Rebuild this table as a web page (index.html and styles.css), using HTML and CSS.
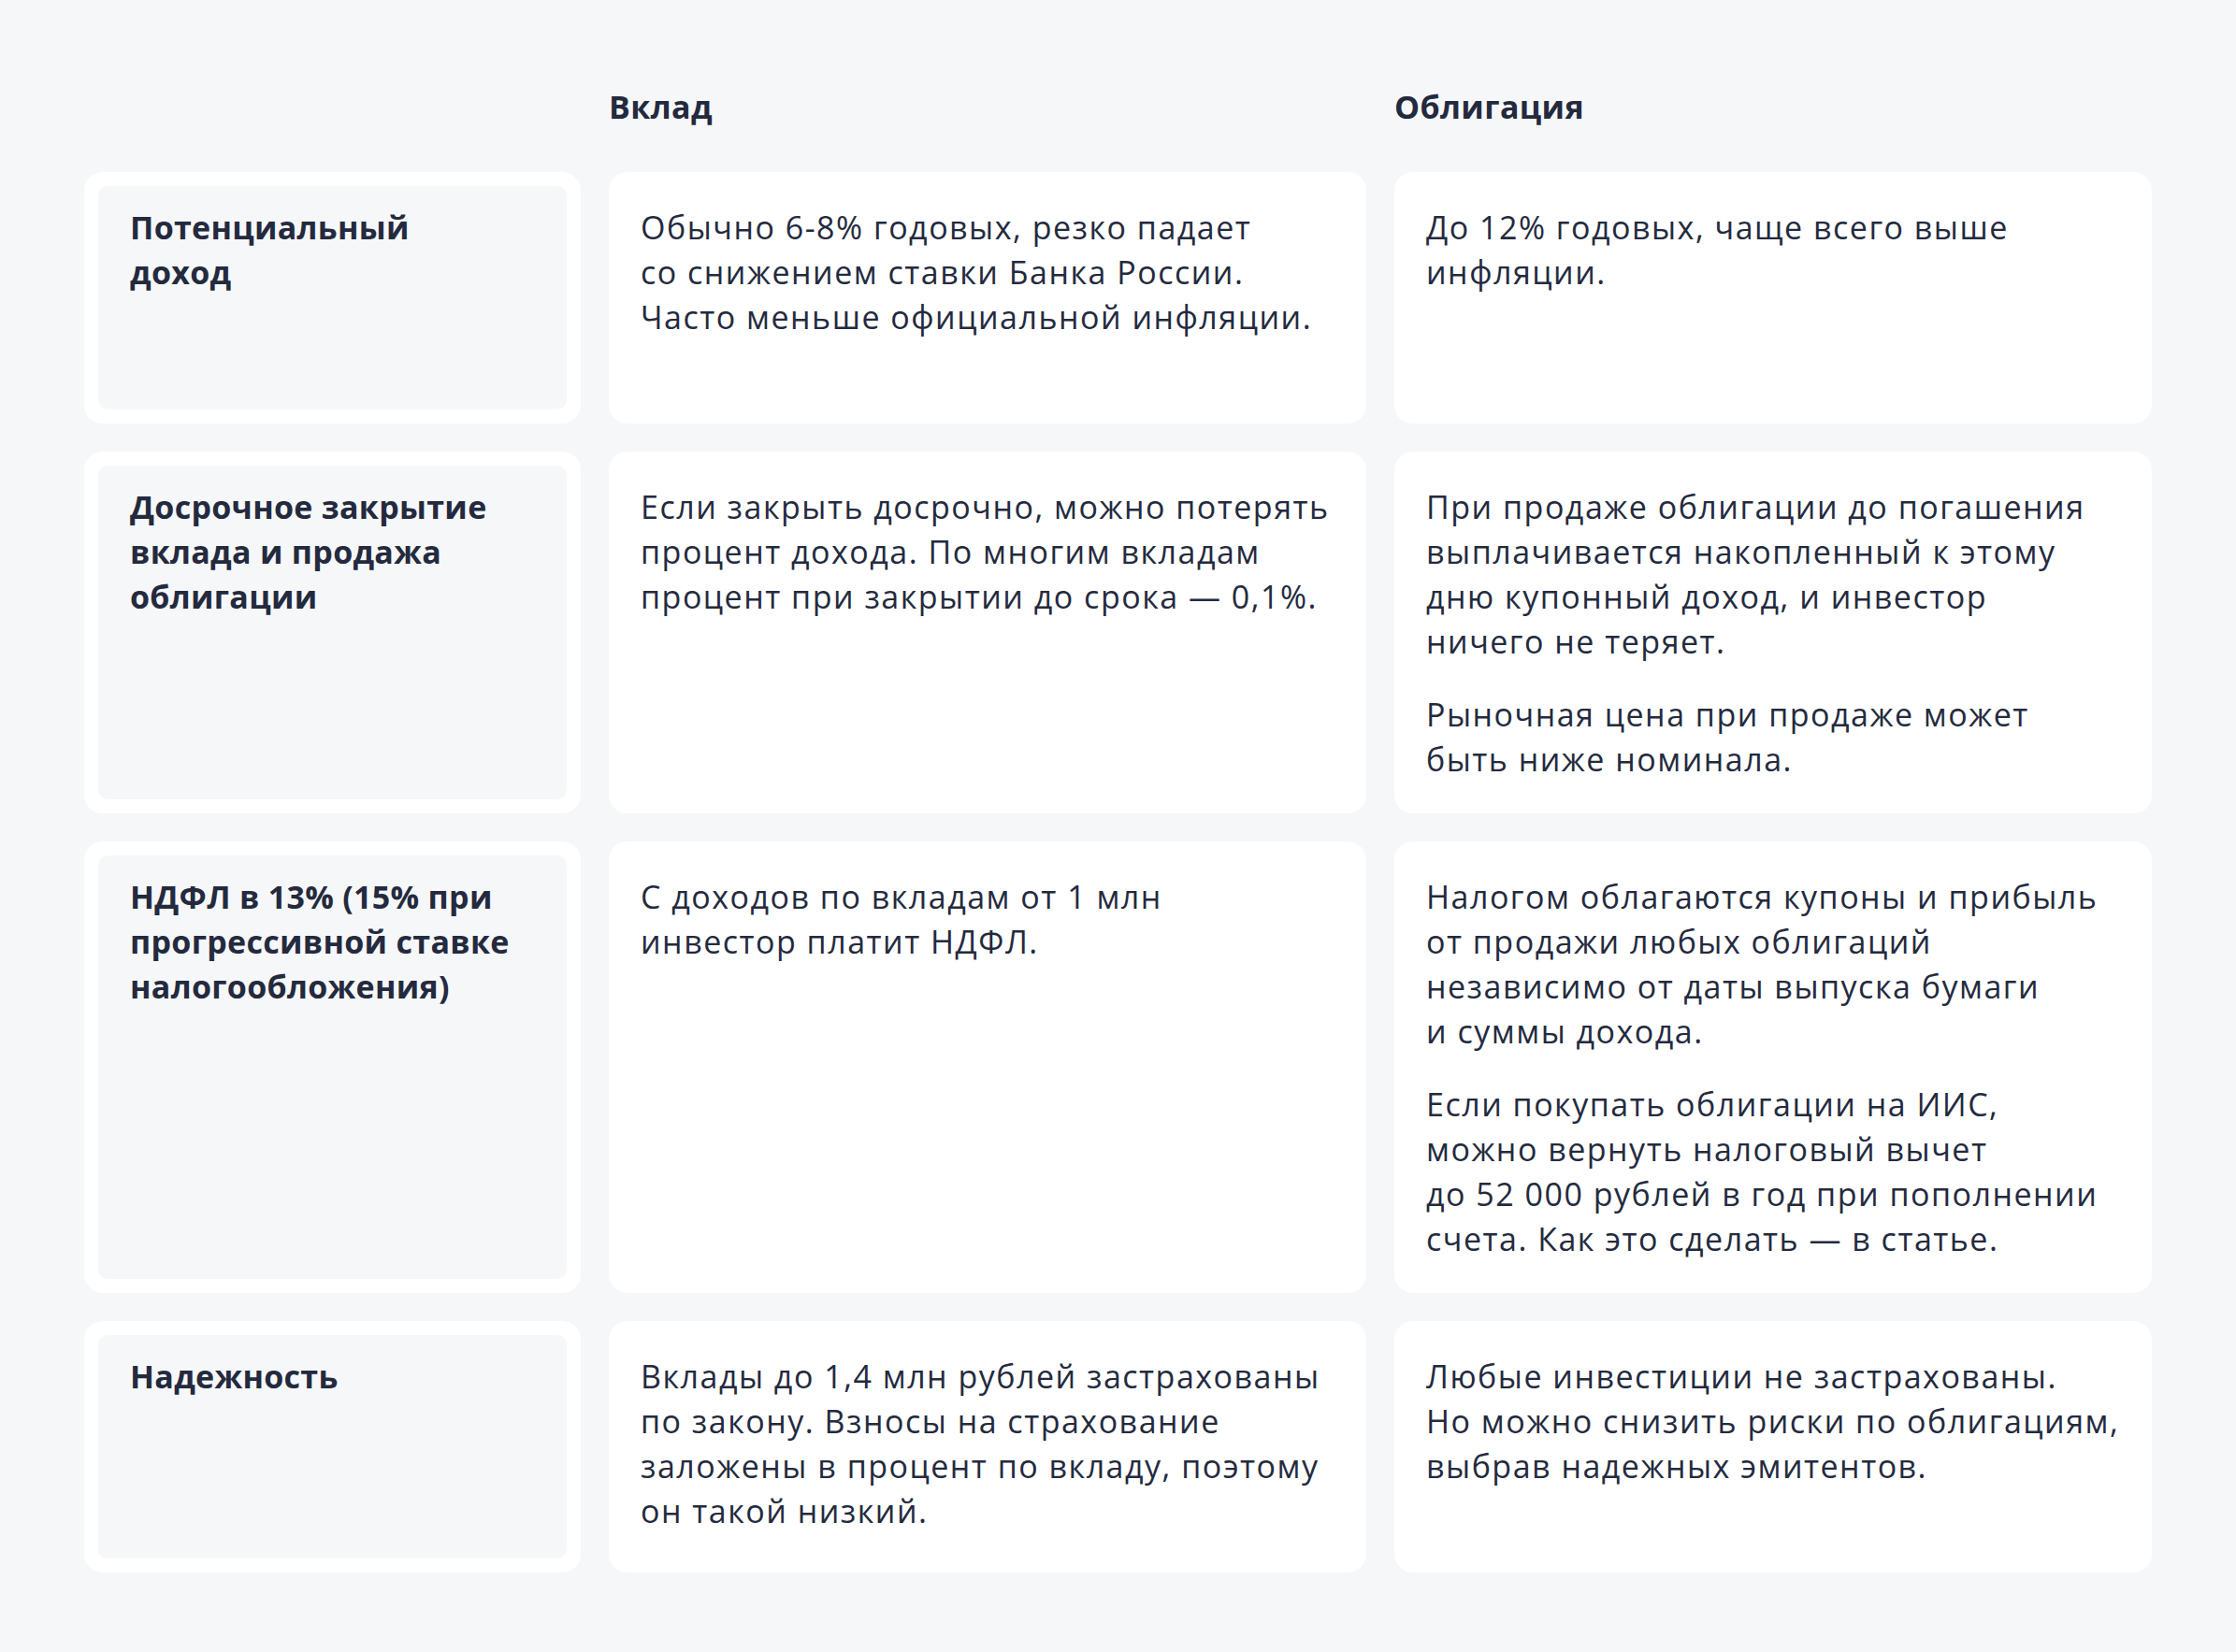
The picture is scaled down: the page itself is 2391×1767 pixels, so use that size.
FILE: index.html
```html
<!DOCTYPE html>
<html lang="ru">
<head>
<meta charset="utf-8">
<title>Вклад и облигация</title>
<link rel="stylesheet" href="styles.css">
</head>
<body>
<main class="compare">
  <div class="head head-empty"></div>
  <div class="head">Вклад</div>
  <div class="head">Облигация</div>

  <div class="label"><div class="label-inner">Потенциальный<br>доход</div></div>
  <div class="cell"><p>Обычно 6-8% годовых, резко падает<br>со снижением ставки Банка России.<br>Часто меньше официальной инфляции.</p></div>
  <div class="cell"><p>До 12% годовых, чаще всего выше<br>инфляции.</p></div>

  <div class="label"><div class="label-inner">Досрочное закрытие<br>вклада и продажа<br>облигации</div></div>
  <div class="cell"><p>Если закрыть досрочно, можно потерять<br>процент дохода. По многим вкладам<br>процент при закрытии до срока — 0,1%.</p></div>
  <div class="cell"><p>При продаже облигации до погашения<br>выплачивается накопленный к этому<br>дню купонный доход, и инвестор<br>ничего не теряет.</p><p>Рыночная цена при продаже может<br>быть ниже номинала.</p></div>

  <div class="label"><div class="label-inner">НДФЛ в 13% (15% при<br>прогрессивной ставке<br>налогообложения)</div></div>
  <div class="cell"><p>С доходов по вкладам от 1 млн<br>инвестор платит НДФЛ.</p></div>
  <div class="cell"><p>Налогом облагаются купоны и прибыль<br>от продажи любых облигаций<br>независимо от даты выпуска бумаги<br>и суммы дохода.</p><p>Если покупать облигации на ИИС,<br>можно вернуть налоговый вычет<br>до 52 000 рублей в год при пополнении<br>счета. Как это сделать — в статье.</p></div>

  <div class="label"><div class="label-inner">Надежность</div></div>
  <div class="cell"><p>Вклады до 1,4 млн рублей застрахованы<br>по закону. Взносы на страхование<br>заложены в процент по вкладу, поэтому<br>он такой низкий.</p></div>
  <div class="cell"><p>Любые инвестиции не застрахованы.<br>Но можно снизить риски по облигациям,<br>выбрав надежных эмитентов.</p></div>
</main>
</body>
</html>
```

FILE: styles.css
```css
html, body {
  margin: 0;
  padding: 0;
  background: #f6f7f9;
}

body {
  font-family: "Open Sans", "Noto Sans", sans-serif;
  color: #242a3e;
  font-size: 34px;
  line-height: 48px;
}

.compare {
  display: grid;
  grid-template-columns: 531px 1fr 1fr;
  column-gap: 30px;
  row-gap: 30px;
  padding: 90px 90px 89px;
}

.head {
  font-weight: 700;
  line-height: 48px;
  letter-spacing: 0.4px;
  margin-bottom: 16px;
}

.label {
  background: #ffffff;
  border-radius: 20px;
  padding: 15px;
  display: flex;
  min-height: 239px;
}

.label-inner {
  flex: 1;
  background: #f6f7f9;
  border-radius: 10px;
  padding: 20px 34px 21px;
  font-weight: 700;
  letter-spacing: 0.3px;
}

.cell {
  background: #ffffff;
  border-radius: 20px;
  padding: 35px 34px 34px;
  min-height: 200px;
  letter-spacing: 1.5px;
}

.cell p {
  margin: 0;
  white-space: nowrap;
}

.cell p + p {
  margin-top: 30px;
}
```
